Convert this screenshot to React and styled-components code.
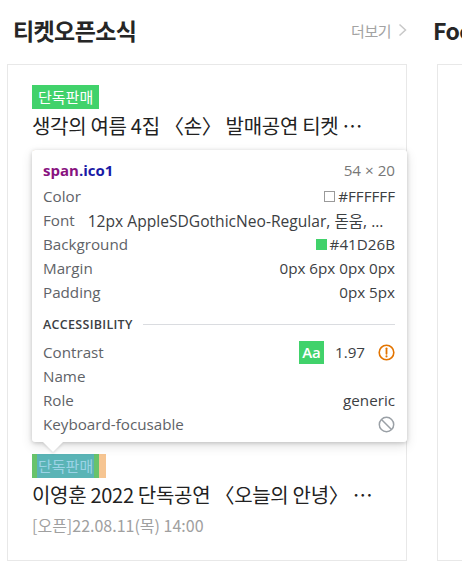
import React from "react";
import styled, { createGlobalStyle } from "styled-components";

const Global = createGlobalStyle`
  html, body { margin: 0; padding: 0; background: #fff; }
  body { overflow: hidden; font-family: "Noto Sans CJK KR", "Noto Sans", sans-serif; }
  * { box-sizing: border-box; }
`;

const Page = styled.div`
  position: relative;
  width: 462px;
  height: 578px;
  display: flex;
  gap: 30px;
  padding-left: 7px;
`;

const Column = styled.section`
  flex: 0 0 400px;
  display: flex;
  flex-direction: column;
`;

const Header = styled.header`
  height: 64px;
  padding-bottom: 4px;
  display: flex;
  align-items: center;
  justify-content: space-between;
`;

const Heading = styled.h2`
  margin: 0 0 0 ${(p) => p.$offset || 0}px;
  font-family: "Noto Sans CJK KR", sans-serif;
  font-size: 23px;
  font-weight: 700;
  letter-spacing: -0.6px;
  color: #262626;
  white-space: nowrap;
`;

const More = styled.a`
  display: flex;
  align-items: center;
  gap: 7px;
  font-size: 15px;
  color: #a3a3a3;
  text-decoration: none;
  letter-spacing: -0.5px;
`;

const Card = styled.div`
  height: 497px;
  border: 1px solid #e8e8e8;
  padding: 20px 24px 0;
  display: flex;
  flex-direction: column;
  gap: 42px;
`;

const Item = styled.div`
  display: flex;
  flex-direction: column;
  align-items: flex-start;
`;

const Badge = styled.span`
  display: inline-block;
  height: 24px;
  line-height: 24px;
  padding: 0 6px;
  font-size: 15px;
  color: ${(p) => (p.$highlight ? "#9cd3e6" : "#fff")};
  background: ${(p) => (p.$highlight ? "#5ab4b6" : "#41d26b")};
  box-shadow: ${(p) =>
    p.$highlight
      ? "inset 5px 0 0 #68c36b, inset -5px 0 0 #68c36b, 7px 0 0 #f6c592"
      : "none"};
`;

const Title = styled.div`
  margin-top: 5px;
  height: 24px;
  line-height: 24px;
  font-size: 20px;
  letter-spacing: -0.3px;
  color: #222;
  white-space: nowrap;
`;

const DateLine = styled.div`
  margin-top: 8px;
  height: 20px;
  line-height: 20px;
  font-size: 16px;
  letter-spacing: 0;
  color: #a0a0a0;
  white-space: nowrap;
`;

const Tooltip = styled.div`
  position: absolute;
  left: 32px;
  top: 150px;
  width: 375px;
  height: 292px;
  padding: 8px 12px 6px 11px;
  background: #fff;
  border-radius: 3px;
  box-shadow: 0 1px 4px rgba(0, 0, 0, 0.18), 0 4px 12px rgba(0, 0, 0, 0.12);
  font-family: "Open Sans", "Noto Sans", sans-serif;
  font-size: 15.2px;
  color: #5f6368;
  &::after {
    content: "";
    position: absolute;
    left: 11px;
    top: 100%;
    border-left: 10px solid transparent;
    border-right: 10px solid transparent;
    border-top: 10px solid #fff;
    filter: drop-shadow(0 2px 1px rgba(0, 0, 0, 0.1));
  }
`;

const TipHeader = styled.div`
  height: 24px;
  display: flex;
  align-items: center;
  justify-content: space-between;
`;

const Selector = styled.span`
  font-weight: 700;
  font-size: 15px;
`;

const Tag = styled.span`
  color: #881280;
`;

const Cls = styled.span`
  color: #1a1aa6;
`;

const Dim = styled.span`
  color: #777;
`;

const PropRow = styled.div`
  height: 24px;
  margin-top: ${(p) => p.$mt || 0}px;
  display: flex;
  align-items: center;
  justify-content: space-between;
  white-space: nowrap;
`;

const Label = styled.span`
  color: #5f6368;
`;

const Value = styled.span`
  display: flex;
  align-items: center;
  color: #3c4043;
`;

const FontValue = styled.span`
  flex: 1;
  margin-left: 13px;
  color: #3c4043;
  font-size: 15.6px;
  font-family: "Open Sans", "Noto Sans CJK KR", sans-serif;
`;

const Swatch = styled.span`
  width: 11px;
  height: 11px;
  margin-right: 3px;
  background: ${(p) => p.$color};
  border: 1px solid ${(p) => (p.$outlined ? "#9a9a9a" : p.$color)};
`;

const Section = styled.div`
  margin-top: 10px;
  margin-bottom: 6px;
  height: 20px;
  display: flex;
  align-items: center;
  gap: 10px;
`;

const SectionTitle = styled.span`
  font-size: 12.5px;
  font-weight: 600;
  letter-spacing: 0.3px;
  text-transform: uppercase;
  color: #3c4043;
`;

const Rule = styled.span`
  flex: 1;
  height: 1px;
  background: #dadce0;
`;

const AaBadge = styled.span`
  width: 25px;
  height: 23px;
  display: flex;
  align-items: center;
  justify-content: center;
  background: #41d26b;
  color: #fff;
  font-weight: 600;
  font-size: 15px;
`;

const Ratio = styled.span`
  margin: 0 13px 0 11px;
  color: #3c4043;
`;

const Warn = () => (
  <svg width="17" height="17" viewBox="0 0 17 17">
    <circle cx="8.5" cy="8.5" r="7.3" fill="none" stroke="#e37400" strokeWidth="1.6" />
    <line x1="8.5" y1="4.3" x2="8.5" y2="9.8" stroke="#e37400" strokeWidth="1.8" strokeLinecap="round" />
    <circle cx="8.5" cy="12.4" r="1.05" fill="#e37400" />
  </svg>
);

const Ban = () => (
  <svg width="17" height="17" viewBox="0 0 17 17">
    <circle cx="8.5" cy="8.5" r="7.2" fill="none" stroke="#9aa0a6" strokeWidth="1.5" />
    <line x1="3.5" y1="3.5" x2="13.5" y2="13.5" stroke="#9aa0a6" strokeWidth="1.5" />
  </svg>
);

const Chevron = () => (
  <svg width="9" height="14" viewBox="0 0 9 14">
    <polyline points="1.5,1.5 7.5,7 1.5,12.5" fill="none" stroke="#c8c8c8" strokeWidth="1.5" />
  </svg>
);

const items = [
  { title: "생각의 여름 4집 〈손〉 발매공연 티켓 …", date: "[오픈]22.08.04(목) 14:00" },
  { title: "이승윤 전국투어 콘서트 〈도킹〉 …", date: "[오픈]22.08.09(화) 20:00" },
  { title: "2022 새소년 단독공연 〈비적응〉 …", date: "[오픈]22.08.10(수) 20:00" },
  { title: "이영훈 2022 단독공연 〈오늘의 안녕〉 …", date: "[오픈]22.08.11(목) 14:00", highlight: true },
];

export default function App() {
  return (
    <>
      <Global />
      <Page>
        <Column>
          <Header>
            <Heading $offset={6}>티켓오픈소식</Heading>
            <More href="#">
              더보기
              <Chevron />
            </More>
          </Header>
          <Card>
            {items.map((it) => (
              <Item key={it.title}>
                <Badge $highlight={it.highlight}>단독판매</Badge>
                <Title>{it.title}</Title>
                <DateLine>{it.date}</DateLine>
              </Item>
            ))}
          </Card>
        </Column>
        <Column>
          <Header>
            <Heading $offset={-4}>Focus On</Heading>
          </Header>
          <Card />
        </Column>

        <Tooltip>
          <TipHeader>
            <Selector>
              <Tag>span</Tag>
              <Cls>.ico1</Cls>
            </Selector>
            <Dim>54 × 20</Dim>
          </TipHeader>
          <PropRow $mt={2}>
            <Label>Color</Label>
            <Value>
              <Swatch $color="#FFFFFF" $outlined />
              #FFFFFF
            </Value>
          </PropRow>
          <PropRow>
            <Label>Font</Label>
            <FontValue>12px AppleSDGothicNeo-Regular, 돋움, ...</FontValue>
          </PropRow>
          <PropRow>
            <Label>Background</Label>
            <Value>
              <Swatch $color="#41D26B" />
              #41D26B
            </Value>
          </PropRow>
          <PropRow>
            <Label>Margin</Label>
            <Value>0px 6px 0px 0px</Value>
          </PropRow>
          <PropRow>
            <Label>Padding</Label>
            <Value>0px 5px</Value>
          </PropRow>
          <Section>
            <SectionTitle>Accessibility</SectionTitle>
            <Rule />
          </Section>
          <PropRow>
            <Label>Contrast</Label>
            <Value>
              <AaBadge>Aa</AaBadge>
              <Ratio>1.97</Ratio>
              <Warn />
            </Value>
          </PropRow>
          <PropRow>
            <Label>Name</Label>
          </PropRow>
          <PropRow>
            <Label>Role</Label>
            <Value>generic</Value>
          </PropRow>
          <PropRow>
            <Label>Keyboard-focusable</Label>
            <Value>
              <Ban />
            </Value>
          </PropRow>
        </Tooltip>
      </Page>
    </>
  );
}
